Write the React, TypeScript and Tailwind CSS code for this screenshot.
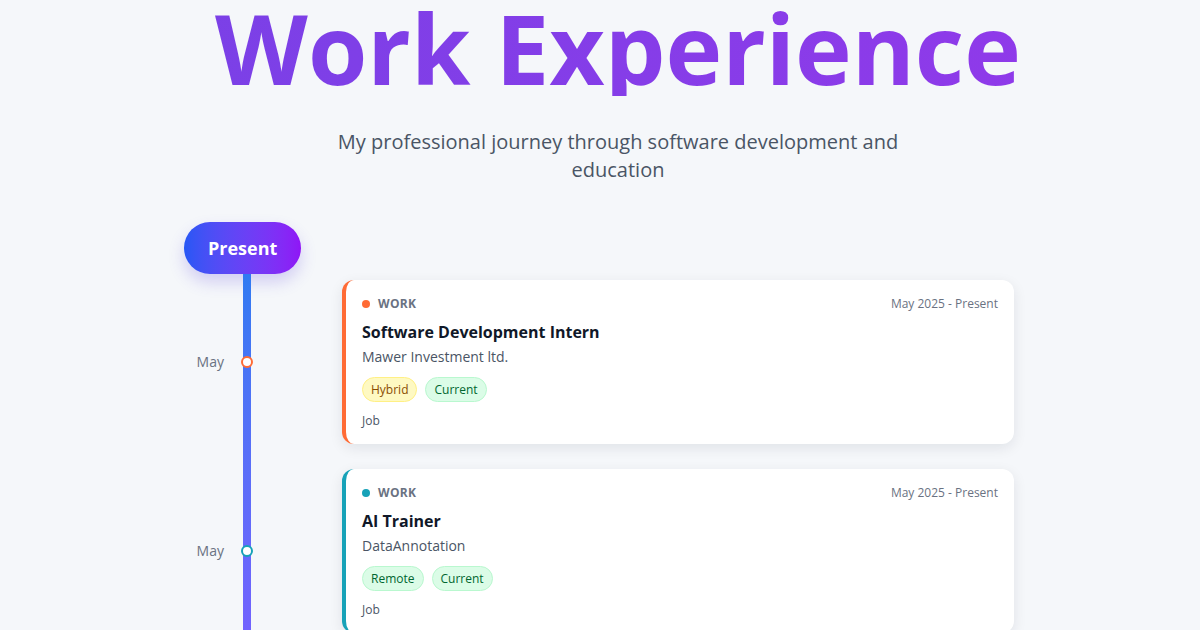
import React from "react";

type Item = {
  color: string;
  title: string;
  company: string;
  tags: { label: string; cls: string }[];
};

const yellow = "bg-yellow-100 text-yellow-800 border-yellow-200";
const green = "bg-green-100 text-green-800 border-green-200";

function Row({ item }: { item: Item }) {
  const isOrange = item.color === "orange";
  return (
    <div className="flex items-center pb-[25px]">
      <div className="flex w-[158px] shrink-0 items-center">
        <span className="w-[40px] text-right text-sm text-gray-500">May</span>
        <span
          className={
            "relative z-10 ml-[17px] h-3 w-3 rounded-full border-2 bg-white " +
            (isOrange ? "border-[#ff6b35]" : "border-[#17a2b8]")
          }
        />
      </div>
      <div
        className={
          "w-[672px] rounded-xl border-l-4 bg-white px-4 pt-4 pb-[15px] shadow-[0_4px_14px_rgba(15,23,42,0.09)] " +
          (isOrange ? "border-[#ff6b35]" : "border-[#17a2b8]")
        }
      >
        <div className="flex items-center justify-between">
          <div className="flex items-center gap-2">
            <span
              className={
                "h-2 w-2 rounded-full " + (isOrange ? "bg-[#ff6b35]" : "bg-[#17a2b8]")
              }
            />
            <span className="text-xs font-bold uppercase tracking-wide text-gray-500">Work</span>
          </div>
          <span className="text-xs text-gray-500">May 2025 - Present</span>
        </div>
        <h3 className="mt-2 text-base font-bold text-gray-900">{item.title}</h3>
        <p className="mt-[3px] text-sm text-gray-600">{item.company}</p>
        <div className="mt-2.5 flex gap-2">
          {item.tags.map((t) => (
            <span
              key={t.label}
              className={"flex h-[25px] items-center rounded-full border px-2 text-xs " + t.cls}
            >
              {t.label}
            </span>
          ))}
        </div>
        <p className="mt-[11px] text-xs text-gray-600">Job</p>
      </div>
    </div>
  );
}

export default function App() {
  const items: Item[] = [
    {
      color: "orange",
      title: "Software Development Intern",
      company: "Mawer Investment ltd.",
      tags: [
        { label: "Hybrid", cls: yellow },
        { label: "Current", cls: green },
      ],
    },
    {
      color: "teal",
      title: "AI Trainer",
      company: "DataAnnotation",
      tags: [
        { label: "Remote", cls: green },
        { label: "Current", cls: green },
      ],
    },
  ];
  return (
    <div
      className="min-h-screen bg-[#f5f7fa]"
      style={{ fontFamily: '"Open Sans", "Noto Sans", sans-serif' }}
    >
      <header className="pl-[36px]">
        <h1 className="bg-gradient-to-r from-[#7741e6] to-[#9338ea] bg-clip-text text-center text-8xl leading-none font-bold text-transparent">
          Work Experience
        </h1>
        <p className="mx-auto mt-8 max-w-[600px] text-center text-xl text-gray-600">
          My professional journey through software development and education
        </p>
      </header>
      <div className="mx-auto mt-[38px] w-[832px]">
        <div className="flex">
          <div className="rounded-full bg-gradient-to-r from-[#2557f5] to-[#8f15f6] px-6 py-3 text-lg font-bold text-white shadow-[0_8px_16px_rgba(80,60,220,0.22)]">
            Present
          </div>
        </div>
        <div className="relative pt-[6px]">
          <div className="absolute top-0 bottom-0 left-[59px] w-2 bg-gradient-to-b from-[#2f7af2] to-[#7560ff]" />
          {items.map((it, i) => (
            <Row key={i} item={it} />
          ))}
        </div>
      </div>
    </div>
  );
}
